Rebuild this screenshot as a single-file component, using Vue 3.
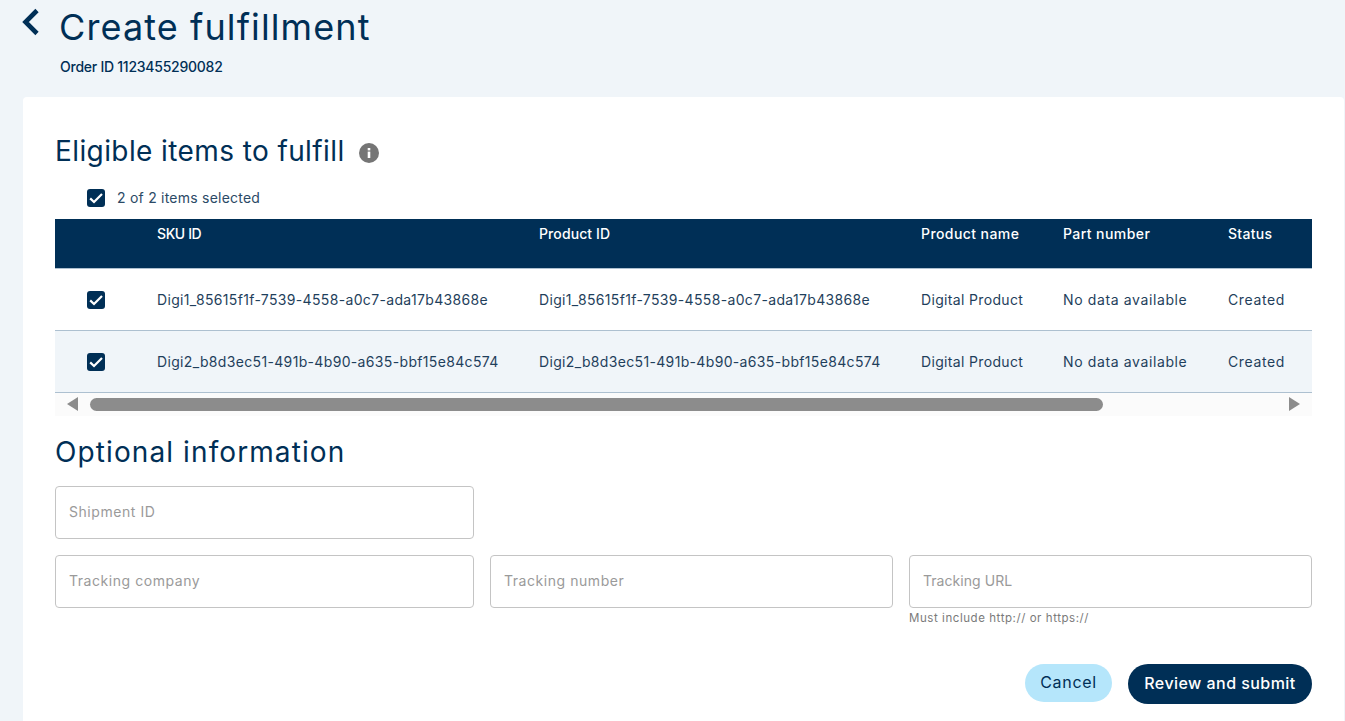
<template>
  <div class="page">
    <header class="page-head">
      <button class="back" aria-label="Back">
        <svg width="20" height="30" viewBox="0 0 20 30">
          <path d="M17 3.5 5.5 15 17 26.5" fill="none" stroke="#002f56" stroke-width="4.6" />
        </svg>
      </button>
      <div>
        <h1>Create fulfillment</h1>
        <div class="order-id">Order ID 1123455290082</div>
      </div>
    </header>

    <main class="card">
      <div class="section-title">
        <h2>Eligible items to fulfill</h2>
        <svg class="info" width="20" height="20" viewBox="0 0 20 20">
          <circle cx="10" cy="10" r="10" fill="#757575" />
          <rect x="8.7" y="8.6" width="2.6" height="6.4" fill="#fff" />
          <rect x="8.7" y="5" width="2.6" height="2.4" fill="#fff" />
        </svg>
      </div>

      <div class="select-all">
        <span class="check">
          <svg width="18" height="18" viewBox="0 0 18 18"><path d="M3.2 9.4 7 13 15 5" fill="none" stroke="#fff" stroke-width="2.2" /></svg>
        </span>
        <span class="select-label">{{ selected.length }} of {{ selected.length }} items selected</span>
      </div>

      <table class="items">
        <colgroup>
          <col class="c-check" /><col class="c-id" /><col class="c-id" /><col class="c-name" /><col class="c-part" /><col class="c-status" />
        </colgroup>
        <thead>
          <tr>
            <th></th>
            <th>SKU ID</th>
            <th>Product ID</th>
            <th>Product name</th>
            <th>Part number</th>
            <th>Status</th>
          </tr>
        </thead>
        <tbody>
          <tr v-for="item in selected" :key="item.sku">
            <td>
              <span class="check">
                <svg width="18" height="18" viewBox="0 0 18 18"><path d="M3.2 9.4 7 13 15 5" fill="none" stroke="#fff" stroke-width="2.2" /></svg>
              </span>
            </td>
            <td>{{ item.sku }}</td>
            <td>{{ item.sku }}</td>
            <td>Digital Product</td>
            <td>No data available</td>
            <td>Created</td>
          </tr>
        </tbody>
      </table>

      <div class="scrollbar">
        <span class="arrow left"></span>
        <div class="track"><div class="thumb"></div></div>
        <span class="arrow right"></span>
      </div>

      <h2 class="optional">Optional information</h2>

      <div class="form-row">
        <input class="field" placeholder="Shipment ID" />
      </div>
      <div class="form-row second">
        <input class="field" placeholder="Tracking company" />
        <input class="field" placeholder="Tracking number" />
        <div>
          <input class="field url" placeholder="Tracking URL" />
          <div class="hint">Must include http:// or https://</div>
        </div>
      </div>

      <div class="actions">
        <button class="btn cancel">Cancel</button>
        <button class="btn submit">Review and submit</button>
      </div>
    </main>
  </div>
</template>

<script setup>
const selected = [
  { sku: 'Digi1_85615f1f-7539-4558-a0c7-ada17b43868e' },
  { sku: 'Digi2_b8d3ec51-491b-4b90-a635-bbf15e84c574' }
]
</script>

<style>
html, body {
  background: #f0f5f9;
  overflow: hidden;
}
</style>

<style scoped>
.page {
  height: 721px;
  overflow: hidden;
  background: #f0f5f9;
  color: #002f56;
  font-family: Inter, "Noto Sans", sans-serif;
}

.page-head {
  display: flex;
  height: 97px;
  padding-left: 20px;
  box-sizing: border-box;
}

.back {
  width: 20px;
  height: 30px;
  margin-top: 7px;
  padding: 0;
  border: 0;
  background: none;
}

.page-head h1 {
  margin: 4px 0 0 19px;
  font-size: 36px;
  line-height: 46px;
  font-weight: 400;
  letter-spacing: 1.1px;
}

.order-id {
  margin: 8px 0 0 20px;
  font-size: 14px;
  line-height: 18px;
  font-weight: 500;
  letter-spacing: -0.25px;
}

.card {
  margin: 0 1px 0 23px;
  padding: 32px 32px 0;
  height: 624px;
  box-sizing: border-box;
  background: #fff;
  border-radius: 4px 4px 0 0;
}

.section-title {
  display: flex;
  align-items: center;
  gap: 14px;
  height: 44px;
}

.section-title h2,
.optional {
  margin: 0;
  font-size: 28px;
  line-height: 44px;
  font-weight: 400;
  letter-spacing: 0.4px;
}

.info {
  margin-top: 3px;
}

.select-all {
  display: flex;
  align-items: center;
  gap: 12px;
  height: 24px;
  margin: 13px 0 9px 32px;
  font-size: 14px;
  letter-spacing: 0.23px;
  color: #2b4a66;
}

.select-label {
  padding-bottom: 2px;
}

.check {
  display: block;
  width: 18px;
  height: 18px;
  border-radius: 3px;
  background: #002f56;
}

.check svg {
  display: block;
}

.items {
  width: 1257px;
  table-layout: fixed;
  border-collapse: collapse;
  font-size: 14px;
}

.c-check { width: 86px; }
.c-id { width: 382px; }
.c-name { width: 142px; }
.c-part { width: 165px; }
.c-status { width: 100px; }

.items th {
  height: 49px;
  padding: 6px 16px 0;
  box-sizing: border-box;
  vertical-align: top;
  text-align: left;
  font-weight: 500;
  letter-spacing: 0.3px;
  color: #fff;
  background: #002f56;
}

.items th:nth-child(2) {
  letter-spacing: -0.4px;
}

.items th:nth-child(3) {
  letter-spacing: 0.1px;
}

.items th:nth-child(4),
.items th:nth-child(5) {
  letter-spacing: 0.42px;
}

.items td {
  height: 62px;
  padding: 0 16px;
  box-sizing: border-box;
  letter-spacing: 0.34px;
  color: #1f3f5c;
  white-space: nowrap;
  border-bottom: 1px solid #adc0d0;
}

.items td:nth-child(n+5) {
  letter-spacing: 0.62px;
}

.items thead tr {
  border-bottom: 1px solid #adc0d0;
}

.items td:first-child .check {
  margin: 2px 0 0 16px;
}

.items tbody tr:nth-child(even) td {
  background: #f0f5f9;
}

.scrollbar {
  display: flex;
  align-items: center;
  width: 1257px;
  height: 23px;
  background: #fbfbfb;
}

.arrow {
  width: 0;
  height: 0;
  border-top: 7px solid transparent;
  border-bottom: 7px solid transparent;
}

.arrow.left {
  margin-left: 12px;
  border-right: 11px solid #8c8c8c;
}

.arrow.right {
  margin-right: 12px;
  border-left: 11px solid #8c8c8c;
}

.track {
  flex: 1;
  padding: 0 186px 0 12px;
}

.thumb {
  height: 13px;
  border-radius: 7px;
  background: #8c8c8c;
}

h2.optional {
  margin-top: 14px;
  letter-spacing: 1.1px;
}

.form-row {
  display: grid;
  grid-template-columns: 419px 403px 403px;
  gap: 16px;
  margin-top: 12px;
}

.form-row.second {
  margin-top: 16px;
}

.field {
  display: block;
  width: 100%;
  height: 53px;
  padding: 0 13px 2px;
  box-sizing: border-box;
  border: 1px solid #c4c4c4;
  border-radius: 4px;
  font: 400 14px Inter, "Noto Sans", sans-serif;
  letter-spacing: 0.55px;
  outline: none;
}

.field.url {
  letter-spacing: 0.05px;
}

.field::placeholder {
  color: #9a9a9a;
  opacity: 1;
}

.hint {
  margin-top: 3px;
  font-size: 11.5px;
  line-height: 15px;
  letter-spacing: 0.56px;
  color: #7a7a7a;
}

.actions {
  display: flex;
  justify-content: flex-end;
  gap: 16px;
  margin-top: 38px;
}

.btn {
  padding: 0 0 2px;
  border: 0;
  border-radius: 20px;
  font-family: Inter, "Noto Sans", sans-serif;
  font-size: 16px;
  font-weight: 500;
}

.cancel {
  width: 87px;
  height: 38px;
  font-weight: 400;
  letter-spacing: 0.7px;
  color: #002f56;
  background: #b5e6fb;
}

.submit {
  width: 184px;
  height: 40px;
  letter-spacing: 0.45px;
  color: #fff;
  background: #002f56;
}
</style>
